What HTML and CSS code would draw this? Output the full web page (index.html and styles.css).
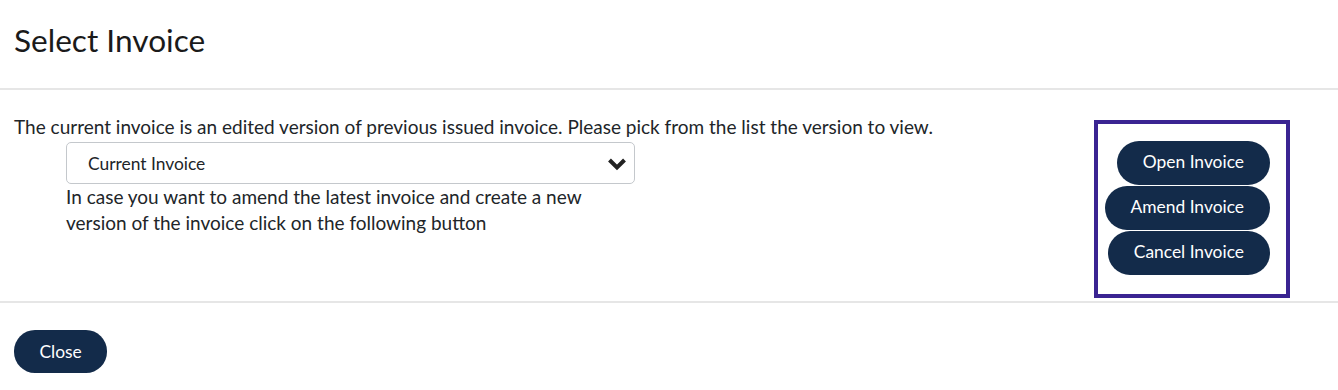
FILE: index.html
```html
<!DOCTYPE html>
<html lang="en">
<head>
<meta charset="utf-8">
<title>Select Invoice</title>
<link rel="stylesheet" href="styles.css">
</head>
<body>
<div class="modal">
  <div class="modal-header">
    <h1 class="modal-title">Select Invoice</h1>
  </div>
  <div class="modal-body">
    <div class="main-col">
      <p class="intro">The current invoice is an edited version of previous issued invoice. Please pick from the list the version to view.</p>
      <div class="indent">
        <div class="select">
          <span class="select-value">Current Invoice</span>
          <svg class="chevron" width="20" height="14" viewBox="0 0 20 14" aria-hidden="true">
            <polyline points="2.5,3 10,10.5 17.5,3" fill="none" stroke="#222" stroke-width="4" stroke-linejoin="miter" stroke-linecap="butt"/>
          </svg>
        </div>
        <p class="help">In case you want to amend the latest invoice and create a new<br>version of the invoice click on the following button</p>
      </div>
    </div>
    <div class="action-box">
      <button class="btn btn-action">Open Invoice</button>
      <button class="btn btn-action">Amend Invoice</button>
      <button class="btn btn-action">Cancel Invoice</button>
    </div>
  </div>
  <div class="modal-footer">
    <button class="btn btn-close">Close</button>
  </div>
</div>
</body>
</html>
```
FILE: styles.css
```css
* { box-sizing: border-box; }
html, body { margin: 0; padding: 0; background: #fff; }
body {
  font-family: "Lato", "Liberation Sans", sans-serif;
  color: #212529;
}
.modal { width: 1338px; }

.modal-header {
  padding: 21px 14px 29px;
  border-bottom: 2px solid #e6e6e6;
}
.modal-title {
  margin: 0;
  font-size: 31.6px;
  line-height: 38px;
  font-weight: 400;
  color: #1a1a1a;
}

.modal-body {
  display: flex;
  align-items: flex-start;
  padding: 24px 48px 3px 14px;
  border-bottom: 2px solid #e6e6e6;
}
.main-col { flex: 1; }
.intro {
  margin: 0;
  font-size: 19px;
  line-height: 26px;
  white-space: nowrap;
}
.indent { padding-left: 52px; padding-top: 2px; }
.select {
  width: 569px;
  height: 42px;
  border: 1px solid #c4c8cc;
  border-radius: 5px;
  display: flex;
  align-items: center;
  justify-content: space-between;
  padding: 0 7px 0 21px;
}
.select-value { font-size: 17.4px; color: #212529; }
.chevron { display: block; margin-top: 1px; }
.help {
  margin: 0;
  font-size: 19px;
  line-height: 26px;
}

.action-box {
  width: 196px;
  margin-top: 6px;
  height: 178px;
  border: 4px solid #3a2492;
  padding: 17px 16px;
  display: flex;
  flex-direction: column;
  align-items: flex-end;
  gap: 1px;
}

.btn {
  font-family: "Lato", "Liberation Sans", sans-serif;
  font-size: 17.4px;
  color: #fff;
  background: #132b4a;
  border: none;
  border-radius: 22px;
  height: 44px;
  padding: 0 26px;
  white-space: nowrap;
  cursor: pointer;
}
.btn-action { padding-bottom: 3px; }

.modal-footer { padding: 27px 14px 0; }
.btn-close { height: 43px; padding: 0 25.5px; border-radius: 21px; }
```
